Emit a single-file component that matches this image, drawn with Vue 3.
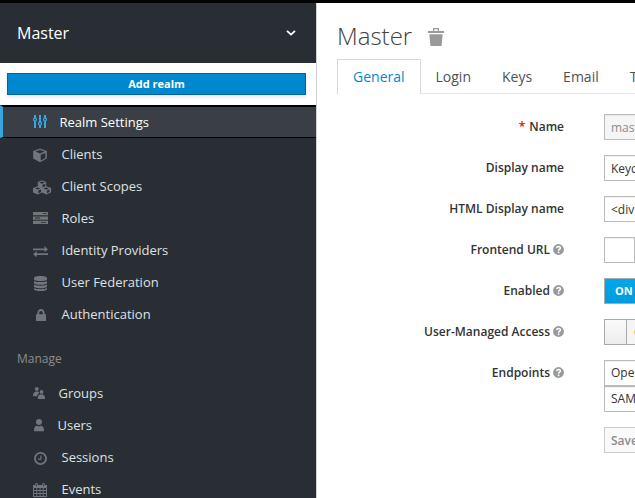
<script setup>
const configure = [
  { icon: 'cube', label: 'Clients' },
  { icon: 'cubes', label: 'Client Scopes' },
  { icon: 'server', label: 'Roles' },
  { icon: 'exchange', label: 'Identity Providers' },
  { icon: 'database', label: 'User Federation' },
  { icon: 'lock', label: 'Authentication' },
]
const manage = [
  { icon: 'group', label: 'Groups' },
  { icon: 'user', label: 'Users' },
  { icon: 'clock', label: 'Sessions' },
  { icon: 'calendar', label: 'Events' },
]
const tabs = ['General', 'Login', 'Keys', 'Email', 'Themes']
const rows = [
  { label: 'Name', value: 'master', required: true, disabled: true },
  { label: 'Display name', value: 'Keycloak' },
  { label: 'HTML Display name', value: '<div class="kc-logo-text">' },
  { label: 'Frontend URL', value: '', help: true },
  { label: 'Enabled', toggle: 'on', help: true },
  { label: 'User-Managed Access', toggle: 'off', help: true },
  { label: 'Endpoints', links: ['OpenID Endpoint Configuration', 'SAML 2.0 Identity Provider Metadata'], help: true },
]
const icons = {
  cube: '<path fill-rule="evenodd" d="M7 .5 13.8 3v7.6L7 14.2.2 10.6V3ZM7 1.9 2.3 3.6 7 5.4l4.7-1.8ZM7.7 6.8v5.7l4.6-2.5V5Z"/>',
  cubes: '<path fill-rule="evenodd" d="M9 .3 13.2 2v4.2l4.9 1.9v4.4l-4.8 2.1L9 12.6l-4.4 2L0 12.5V8.1l4.8-1.9V2ZM9 1.5 6.3 2.6 9 3.7l2.7-1.1ZM9.6 4.8v2.6l2.6-1.1V3.7ZM4.7 7.4 2 8.5l2.7 1.1 2.7-1.1ZM5.3 10.6v2.7L8 12.1V9.5ZM13.3 7.4l-2.7 1.1 2.7 1.1L16 8.5ZM13.9 10.6v2.7l2.6-1.2V9.5Z"/>',
  server: '<path fill-rule="evenodd" d="M0 0h15v3.3H0ZM0 4.4h15v3.3H0ZM0 8.8h15v3.3H0ZM10 1.2v.9h3.5v-.9ZM2 5.6v.8h5v-.8ZM8 10v.8h5V10Z"/>',
  exchange: '<path d="M0 2.4h11.5V0L15 3.4 11.5 6V4.2H0ZM15 7.2H3.7V4.9L0 8.2l3.7 3V9H15Z"/>',
  database: '<path d="M0 2C0-.7 13-.7 13 2v1.2c0 2.5-13 2.5-13 0ZM0 4.9c2.5 1.6 10.5 1.6 13 0v2c0 2.4-13 2.4-13 0ZM0 8.5c2.5 1.6 10.5 1.6 13 0v1.9c0 2.4-13 2.4-13 0ZM0 12c2.5 1.6 10.5 1.6 13 0v1c0 2.7-13 2.7-13 0Z"/>',
  lock: '<path fill-rule="evenodd" d="M1.4 5.2V4C1.4-1.2 8.6-1.2 8.6 4v1.2H10V12H0V5.2ZM3.2 5.2h3.6V4C6.8 1.2 3.2 1.2 3.2 4Z"/>',
  group: '<circle cx="3.8" cy="2" r="1.9"/><circle cx="8.5" cy="4.9" r="1.9"/><path d="M0 9.2C0 5.8 1 4.7 3.4 4.4c1.7 0 2.6.5 2.7 1.4L3.7 9.2ZM4.7 12c0-3.1 1.3-4.2 2.4-4.4h2.7c1.4.3 2.2 1.7 2.2 4.4Z"/>',
  user: '<circle cx="5" cy="3" r="3"/><path d="M0 12.2C0 8.2 1 7 3 6.7q2 1.3 4 0c2 .3 3 1.5 3 5.5Z"/>',
  clock: '<path fill="none" stroke="currentColor" stroke-width="1.8" d="M6.5.9a5.6 5.6 0 1 1 0 11.2A5.6 5.6 0 0 1 6.5.9"/><path fill="none" stroke="currentColor" stroke-width="1.2" d="M6.9 3.4v3.8H4"/>',
  calendar: '<path fill-rule="evenodd" d="M0 2h2.3V.2h2.5V2h4.4V.2h2.5V2H14v12H0ZM1 5v2h2.3V5ZM4.2 5v2h2.4V5ZM7.5 5v2h2.3V5ZM10.7 5v2H13V5ZM1 8v2h2.3V8ZM4.2 8v2h2.4V8ZM7.5 8v2h2.3V8ZM10.7 8v2H13V8ZM1 11v2h2.3v-2ZM4.2 11v2h2.4v-2ZM7.5 11v2h2.3v-2ZM10.7 11v2H13v-2ZM3.2 1v2.2h.7V1ZM10.1 1v2.2h.7V1Z"/>',
}
</script>

<template>
  <div class="page">
    <aside class="sidebar">
      <div class="realm">
        <span>Master</span>
        <svg width="10" height="6" viewBox="0 0 10 6"><path d="M1 .8 5 4.6 9 .8" fill="none" stroke="#fff" stroke-width="1.8" /></svg>
      </div>
      <div class="add"><button>Add realm</button></div>
      <nav>
        <a class="item active">
          <svg width="14" height="14" viewBox="0 0 14 14" fill="none" stroke="currentColor" stroke-width="2">
            <path d="M2 0v3M2 6v7M7 0v7M7 10v3M12 0v3M12 6v7" />
            <g stroke-width="1.3"><circle cx="2" cy="4.5" r="1.5" /><circle cx="7" cy="8.5" r="1.5" /><circle cx="12" cy="4.5" r="1.5" /></g>
          </svg>
          <span>Realm Settings</span>
        </a>
        <a v-for="m in configure" :key="m.label" class="item" :class="m.icon">
          <svg class="glyph" fill="currentColor" v-html="icons[m.icon]"></svg>
          <span>{{ m.label }}</span>
        </a>
        <h2>Manage</h2>
        <a v-for="m in manage" :key="m.label" class="item" :class="m.icon">
          <svg class="glyph" fill="currentColor" v-html="icons[m.icon]"></svg>
          <span>{{ m.label }}</span>
        </a>
      </nav>
    </aside>
    <main>
      <h1>
        <span>Master</span>
        <svg width="16" height="18" viewBox="0 0 16 18" fill="#999"><path fill-rule="evenodd" d="M0 3h5V0h6v3h5v2H0ZM6.3 1.3V3h3.4V1.3ZM1.3 6.2h13.4L13.5 18h-11Z" /></svg>
      </h1>
      <ul class="tabs">
        <li v-for="(t, i) in tabs" :key="t" :class="{ current: i === 0 }">{{ t }}</li>
      </ul>
      <form>
        <div v-for="r in rows" :key="r.label" class="row">
          <label>
            <b v-if="r.required">*</b><span>{{ r.label }}</span>
            <svg v-if="r.help" width="11" height="11" viewBox="0 0 11 11">
              <circle cx="5.5" cy="5.5" r="5.4" fill="#999" />
              <path d="M3.7 4.1C3.9 1.7 7.5 2 7.4 4.1 7.3 5.3 5.6 5.2 5.6 6.7" fill="none" stroke="#fff" stroke-width="1.5" />
              <path d="M4.8 7.6h1.6v1.5H4.8z" fill="#fff" />
            </svg>
          </label>
          <div v-if="r.links" class="links"><div v-for="l in r.links" :key="l" class="field">{{ l }}</div></div>
          <div v-else-if="r.toggle === 'on'" class="toggle on">ON</div>
          <div v-else-if="r.toggle === 'off'" class="toggle off"><i></i><span>OFF</span></div>
          <div v-else class="field input" :class="{ disabled: r.disabled }">{{ r.value }}</div>
        </div>
        <div class="actions"><button type="button" class="save">Save</button></div>
      </form>
    </main>
  </div>
</template>

<style>
body { margin: 0; overflow: hidden; }
</style>

<style scoped>
* { box-sizing: border-box; }
.page { width: 635px; height: 498px; border-top: 3px solid #030303; display: flex; overflow: hidden; background: #fff; font-family: "Open Sans", sans-serif; font-size: 12px; color: #333; }
.sidebar { width: 317px; flex: none; background: #292e34; border-right: 1px solid #d1d1d1; overflow: hidden; }
.realm { height: 60px; padding: 0 20px 0 17px; display: flex; align-items: center; justify-content: space-between; color: #fff; font-size: 16px; }
.add { height: 42px; background: #fff; padding: 10px 10px 0 7px; }
.add button { display: block; width: 299px; height: 22px; padding: 0 0 2px; border: 1px solid #00659c; background: #0088ce; color: #fff; font: 700 11px "Open Sans", sans-serif; box-shadow: 0 2px 3px rgba(3, 3, 3, .1); }
.item { height: 32px; display: flex; align-items: center; padding-left: 33px; font-size: 13px; color: #72767b; white-space: nowrap; }
.item span { color: #dfe1e3; padding-bottom: 1px; }
.item.active { height: 33px; border-top: 2px solid #030303; border-bottom: 1px solid #030303; background: #393f45; border-left: 3px solid #39a5dc; padding-left: 30px; color: #39a5dc; }
.item.active span { color: #fff; margin-left: 12.5px; }
.glyph { width: 18px; height: 15px; flex: none; margin-right: 10.5px; margin-top: 3px; overflow: visible; }
.server .glyph { height: 13px; margin-top: 1px; }
.exchange .glyph { height: 12px; margin-top: 3px; }
.lock .glyph { height: 12px; width: 15px; margin-left: 3px; margin-top: 2px; }
.database .glyph { width: 17px; margin-left: 1px; }
.group .glyph { width: 13px; height: 12px; margin-right: 12.5px; margin-top: 0; }
.user .glyph { width: 12px; height: 12px; margin-left: 1px; margin-right: 11.5px; margin-top: 0; }
.clock .glyph { height: 13px; width: 17px; margin-left: 1px; margin-top: 3px; }
h2 { margin: 18px 0 7px; padding-left: 17px; height: 22px; line-height: 22px; font-size: 12px; font-weight: 400; color: #8b8d8f; }
main { flex: 1; min-width: 0; padding-left: 20px; overflow: hidden; }
h1 { display: flex; align-items: center; gap: 16px; height: 34px; margin: 16px 0 6px; font-size: 24px; font-weight: 300; color: #404040; line-height: 34px; }
h1 svg { margin-top: 2px; }
.tabs { display: flex; list-style: none; margin: 0; padding: 0; height: 35px; width: 400px; border-bottom: 1px solid #e9e8e8; font-size: 14px; color: #4d5258; }
.tabs li { height: 35px; line-height: 34px; padding: 0 15px 0 14px; border: solid transparent; border-width: 1px 1px 0; }
.tabs li.current { background: #fff; border-color: #d9d9d9; color: #0088ce; padding: 0 15px; }
form { padding-top: 20px; }
.row { display: flex; margin-bottom: 15px; }
label { width: 227px; flex: none; height: 26px; margin-right: 40px; padding-bottom: 1px; display: flex; justify-content: flex-end; align-items: center; font-weight: 600; white-space: nowrap; }
label b { color: #f00; margin-right: 4px; font-weight: 600; }
label svg { margin-left: 3px; flex: none; }
.field { width: 400px; height: 26px; border: 1px solid #bbb; padding: 0 6px; line-height: 23px; white-space: nowrap; box-shadow: inset 0 1px 1px rgba(3, 3, 3, .06); }
.input { line-height: 26px; }
.disabled { background: #f5f5f5; color: #8b8d8f; }
.toggle { height: 26px; width: 66px; border: 1px solid #aaa; line-height: 24px; font-weight: 700; font-size: 11px; flex: none; }
.on { background: linear-gradient(#00a9ec, #009bdc); color: #fff; padding-left: 10px; }
.off { display: flex; background: #f5f5f5; color: #ec7a08; }
.off i { width: 22px; border-right: 1px solid #aaa; background: linear-gradient(#fafafa, #ededed); }
.off span { margin-left: 7px; }
.actions { padding-left: 267px; }
.save { display: block; height: 26px; width: 44px; padding: 0 6px; text-align: left; border: 1px solid #ccc; background: #fafafa; color: #8b8d8f; font: 600 12px "Open Sans", sans-serif; }
</style>
